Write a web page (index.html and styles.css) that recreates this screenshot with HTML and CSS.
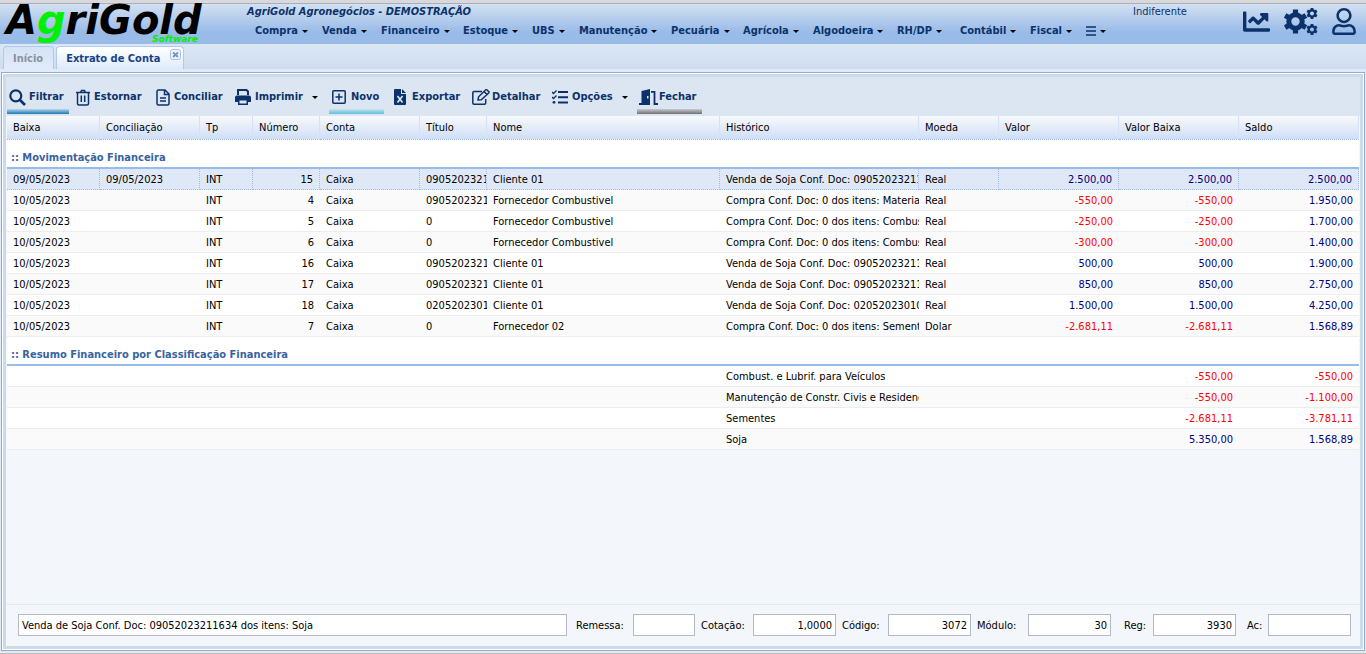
FILE: index.html
```html
<!DOCTYPE html>
<html lang="pt-BR">
<head>
<meta charset="utf-8">
<title>AgriGold Agronegócios - Extrato de Conta</title>
<link rel="stylesheet" href="styles.css">
</head>
<body>
<header class="top">
  <a class="logo" href="#" aria-label="AgriGold Software"><span class="logo-name">A<span class="logo-g">g</span>riGold</span><span class="logo-sub">Software</span></a>
  <div class="top-main">
    <h1 class="company">AgriGold Agronegócios - DEMOSTRAÇÃO</h1>
    <nav class="menu">
      <button class="menu-item caret">Compra</button>
      <button class="menu-item caret">Venda</button>
      <button class="menu-item caret">Financeiro</button>
      <button class="menu-item caret">Estoque</button>
      <button class="menu-item caret">UBS</button>
      <button class="menu-item caret">Manutenção</button>
      <button class="menu-item caret">Pecuária</button>
      <button class="menu-item caret">Agrícola</button>
      <button class="menu-item caret">Algodoeira</button>
      <button class="menu-item caret">RH/DP</button>
      <button class="menu-item caret">Contábil</button>
      <button class="menu-item caret">Fiscal</button>
      <button class="menu-item caret" aria-label="Mais"><svg width="10" height="10" viewBox="0 0 10 10"><path d="M0 1h10M0 5h10M0 9h10" stroke="currentColor" stroke-width="1.4"/></svg></button>
    </nav>
  </div>
  <span class="season">Indiferente</span>
  <div class="top-icons">
    <button class="icon-btn" aria-label="Gráficos"><svg width="27" height="27" viewBox="0 0 512 512" fill="currentColor"><path d="M496 384H64V80c0-8.840-7.160-16-16-16H16C7.160 64 0 71.160 0 80v336c0 17.670 14.330 32 32 32h464c8.840 0 16-7.160 16-16v-32c0-8.840-7.160-16-16-16zM464 96H345.940c-21.380 0-32.090 25.850-16.970 40.970l32.400 32.400L288 242.750l-73.370-73.370c-12.500-12.500-32.760-12.500-45.250 0l-68.690 68.690c-6.250 6.250-6.250 16.380 0 22.630l22.620 22.620c6.250 6.250 16.380 6.250 22.630 0L192 237.250l73.370 73.370c12.500 12.500 32.760 12.500 45.250 0l96-96 32.400 32.400c15.120 15.120 40.970 4.410 40.970-16.970V112c.010-8.840-7.150-16-15.990-16z"/></svg></button>
    <button class="icon-btn" aria-label="Configurações"><svg width="34" height="27" viewBox="0 0 34 27" fill="none" stroke="currentColor"><circle cx="11.500" cy="13.500" r="6.700" stroke-width="5"/><path d="M11.500 1.500v4M11.500 21.500v4M1.100 7.500l3.500 2M18.400 17.500l3.500 2M1.100 19.500l3.500-2M18.400 9.500l3.500-2" stroke-width="5.200"/><g id="g"><circle cx="28" cy="5.500" r="3.200" stroke-width="2.400"/><path d="M28 0v2M28 9v2M23.200 2.700l1.800 1M31 7.300l1.800 1M23.200 8.300l1.800-1M31 3.700l1.800-1" stroke-width="2.700"/></g><use href="#g" y="16"/></svg></button>
    <button class="icon-btn" aria-label="Usuário"><svg width="24" height="27" viewBox="0 0 448 512" fill="currentColor"><path d="M313.600 304c-28.700 0-42.500 16-89.600 16-47.100 0-60.800-16-89.600-16C60.200 304 0 364.200 0 438.400V464c0 26.500 21.500 48 48 48h352c26.500 0 48-21.500 48-48v-25.600c0-74.200-60.200-134.400-134.400-134.400zM400 464H48v-25.600c0-47.600 38.800-86.400 86.400-86.400 14.600 0 38.300 16 89.600 16 51.700 0 74.900-16 89.600-16 47.600 0 86.400 38.800 86.400 86.400V464zM224 288c79.500 0 144-64.500 144-144S303.500 0 224 0 80 64.500 80 144s64.500 144 144 144zm0-240c52.900 0 96 43.100 96 96s-43.100 96-96 96-96-43.100-96-96 43.100-96 96-96z"/></svg></button>
  </div>
</header>
<nav class="tabs">
  <a class="tab" href="#">Início</a>
  <span class="tab tab-active"><a class="tab-link" href="#">Extrato de Conta</a><button class="tab-close" aria-label="Fechar aba"><svg width="11" height="11" viewBox="0 0 11 11" fill="none"><rect x=".5" y=".5" width="10" height="10" rx="2" fill="#eef4fc" stroke="#a6c1e4"/><path d="M3 3.500l5 4.500M8 3.500l-5 4.500" stroke="#6e93c8" stroke-width="1.800"/></svg></button></span>
</nav>
<main class="frame">
 <div class="panel">
  <div class="toolbar">
    <button class="tool line-blue"><svg width="17" height="17" viewBox="0 0 17 17" fill="none" stroke="currentColor"><circle cx="6.800" cy="6.800" r="5.500" stroke-width="2.200"/><path d="M11 11l5 5" stroke-width="2.600"/></svg><span>Filtrar</span></button>
    <button class="tool"><svg width="14" height="17" viewBox="0 0 14 17" fill="none" stroke="currentColor" stroke-width="1.500"><path d="M0 3.500h14M4.500 3.500l1-2h3l1 2M1.500 3.500v11q0 1.500 1.500 1.500h8q1.500 0 1.500-1.500v-11M5.300 6.500v6.500M8.700 6.500v6.500"/></svg><span>Estornar</span></button>
    <button class="tool"><svg width="14" height="17" viewBox="0 0 14 17" fill="none" stroke="currentColor" stroke-width="1.500"><path d="M1 2.500Q1 1 2.500 1H9l4 4v9.500q0 1.500-1.500 1.500h-9Q1 16 1 14.500zM8.500 1v4.500H13M4 9h6M4 12h6"/></svg><span>Conciliar</span></button>
    <button class="tool"><svg width="16" height="16" viewBox="0 0 16 16"><path d="M3 6V1h8.500L13 2.500V6" fill="none" stroke="currentColor" stroke-width="2"/><path d="M2 6.500h12q2 0 2 2V13h-3v3H3v-3H0V8.500q0-2 2-2zM4.500 11.500v3h7v-3z" fill="currentColor" fill-rule="evenodd"/></svg><span class="caret caret-far">Imprimir</span></button>
    <button class="tool line-cyan"><svg width="14" height="14" viewBox="0 0 14 14" fill="none" stroke="currentColor" stroke-width="1.500"><rect x=".8" y=".8" width="12.400" height="12.400" rx="1"/><path d="M7 3.500v7M3.500 7h7"/></svg><span>Novo</span></button>
    <button class="tool tool-export"><svg width="12" height="16" viewBox="0 0 12 16"><path d="M1 0h6v5h5v10q0 1-1 1H1q-1 0-1-1V1q0-1 1-1zM8 0l4 4H8z" fill="currentColor"/><path d="M3.500 7l5 6.500M8.500 7l-5 6.500" stroke="#dce6f2" stroke-width="1.700"/></svg><span>Exportar</span></button>
    <button class="tool tool-tight"><svg width="18" height="16" viewBox="0 0 18 16" fill="none" stroke="currentColor" stroke-width="1.500"><path d="M10 2.500H2Q.8 2.500.8 3.700v10.300q0 1.200 1.200 1.200h10.500q1.200 0 1.200-1.200V10M6 11l.6-3.200L13.500 1q.8-.6 1.600 0l1.600 1.600q.6.700 0 1.500L9.300 10.800zM12 2.500l3 3"/></svg><span>Detalhar</span></button>
    <button class="tool"><svg width="16" height="14" viewBox="0 0 16 14" fill="none" stroke="currentColor"><path d="M6 2h10M6 7.200h10M6 12.400h10" stroke-width="2"/><path d="M0 2l1.500 1.500L4.500.5M0 7l1.500 1.500L4.500 5.500" stroke-width="1.300"/><circle cx="2" cy="12.300" r="1.400" fill="currentColor" stroke="none"/></svg><span class="caret caret-far">Opções</span></button>
    <button class="tool line-gray"><svg width="19" height="16" viewBox="0 0 19 16"><path d="M0 14h2.500V2L11 0v16H0zM8 7v2.500h1.500V7z" fill="currentColor" fill-rule="evenodd"/><path d="M12 2.800h3.500V15H19" fill="none" stroke="currentColor" stroke-width="1.800"/></svg><span>Fechar</span></button>
  </div>
  <div class="grid">
  <table class="ledger">
    <colgroup><col class="w-baixa"><col class="w-conc"><col class="w-tp"><col class="w-num"><col class="w-conc"><col class="w-num"><col><col class="w-hist"><col class="w-moeda"><col class="w-valor"><col class="w-valor"><col class="w-valor"></colgroup>
    <thead><tr><th>Baixa</th><th>Conciliação</th><th>Tp</th><th>Número</th><th>Conta</th><th>Título</th><th>Nome</th><th>Histórico</th><th>Moeda</th><th>Valor</th><th>Valor Baixa</th><th>Saldo</th></tr></thead>
    <tbody>
      <tr class="group"><th colspan="12">:: Movimentação Financeira</th></tr>
      <tr class="selected"><td>09/05/2023</td><td>09/05/2023</td><td>INT</td><td class="num">15</td><td>Caixa</td><td>0905202321</td><td>Cliente 01</td><td>Venda de Soja Conf. Doc: 09052023211</td><td>Real</td><td class="num pos">2.500,00</td><td class="num pos">2.500,00</td><td class="num pos">2.500,00</td></tr>
      <tr class="alt"><td>10/05/2023</td><td></td><td>INT</td><td class="num">4</td><td>Caixa</td><td>0905202321</td><td>Fornecedor Combustivel</td><td>Compra Conf. Doc: 0 dos itens: Material</td><td>Real</td><td class="num neg">-550,00</td><td class="num neg">-550,00</td><td class="num pos">1.950,00</td></tr>
      <tr><td>10/05/2023</td><td></td><td>INT</td><td class="num">5</td><td>Caixa</td><td>0</td><td>Fornecedor Combustivel</td><td>Compra Conf. Doc: 0 dos itens: Combus</td><td>Real</td><td class="num neg">-250,00</td><td class="num neg">-250,00</td><td class="num pos">1.700,00</td></tr>
      <tr class="alt"><td>10/05/2023</td><td></td><td>INT</td><td class="num">6</td><td>Caixa</td><td>0</td><td>Fornecedor Combustivel</td><td>Compra Conf. Doc: 0 dos itens: Combus</td><td>Real</td><td class="num neg">-300,00</td><td class="num neg">-300,00</td><td class="num pos">1.400,00</td></tr>
      <tr><td>10/05/2023</td><td></td><td>INT</td><td class="num">16</td><td>Caixa</td><td>0905202321</td><td>Cliente 01</td><td>Venda de Soja Conf. Doc: 09052023211</td><td>Real</td><td class="num pos">500,00</td><td class="num pos">500,00</td><td class="num pos">1.900,00</td></tr>
      <tr class="alt"><td>10/05/2023</td><td></td><td>INT</td><td class="num">17</td><td>Caixa</td><td>0905202321</td><td>Cliente 01</td><td>Venda de Soja Conf. Doc: 09052023211</td><td>Real</td><td class="num pos">850,00</td><td class="num pos">850,00</td><td class="num pos">2.750,00</td></tr>
      <tr><td>10/05/2023</td><td></td><td>INT</td><td class="num">18</td><td>Caixa</td><td>0205202301</td><td>Cliente 01</td><td>Venda de Soja Conf. Doc: 02052023010</td><td>Real</td><td class="num pos">1.500,00</td><td class="num pos">1.500,00</td><td class="num pos">4.250,00</td></tr>
      <tr class="alt"><td>10/05/2023</td><td></td><td>INT</td><td class="num">7</td><td>Caixa</td><td>0</td><td>Fornecedor 02</td><td>Compra Conf. Doc: 0 dos itens: Sement</td><td>Dolar</td><td class="num neg">-2.681,11</td><td class="num neg">-2.681,11</td><td class="num pos">1.568,89</td></tr>
    </tbody>
    <tbody>
      <tr class="group"><th colspan="12">:: Resumo Financeiro por Classificação Financeira</th></tr>
      <tr><td colspan="7"></td><td>Combust. e Lubrif. para Veículos</td><td></td><td></td><td class="num neg">-550,00</td><td class="num neg">-550,00</td></tr>
      <tr class="alt"><td colspan="7"></td><td>Manutenção de Constr. Civis e Residenc</td><td></td><td></td><td class="num neg">-550,00</td><td class="num neg">-1.100,00</td></tr>
      <tr><td colspan="7"></td><td>Sementes</td><td></td><td></td><td class="num neg">-2.681,11</td><td class="num neg">-3.781,11</td></tr>
      <tr class="alt"><td colspan="7"></td><td>Soja</td><td></td><td></td><td class="num pos">5.350,00</td><td class="num pos">1.568,89</td></tr>
    </tbody>
  </table>
  </div>
  <form class="footer">
    <input class="field field-desc" aria-label="Histórico" value="Venda de Soja Conf. Doc: 09052023211634 dos itens: Soja">
    <label for="remessa">Remessa:</label><input class="field" id="remessa">
    <label for="cotacao">Cotação:</label><input class="field" id="cotacao" value="1,0000">
    <label for="codigo">Código:</label><input class="field" id="codigo" value="3072">
    <label for="modulo">Módulo:</label><input class="field" id="modulo" value="30">
    <label for="reg">Reg:</label><input class="field" id="reg" value="3930">
    <label for="ac">Ac:</label><input class="field" id="ac">
  </form>
 </div>
</main>
</body>
</html>
```
FILE: styles.css
```css
* { box-sizing: border-box; }
body {
  margin: 0;
  min-height: 100vh;
  display: flex;
  flex-direction: column;
  background: #dfebfa;
  border-top: 3px solid #d9d9dd;
  border-bottom: 1px solid #c6bcae;
  font: 11px/14px "DejaVu Sans Condensed", "Noto Sans", sans-serif;
  color: #000;
}
button, input { font: inherit; color: inherit; }
button { border: 0; padding: 0; background: none; cursor: pointer; }
svg { display: block; flex: none; }

.top {
  display: flex;
  height: 41px;
  border-top: 1px solid #a9afb9;
  background: linear-gradient(#d3e1f1, #99bbe8 70%);
  color: #0b326b;
}
.logo {
  position: relative;
  width: 247px;
  padding-left: 6px;
  font-family: "DejaVu Sans", sans-serif;
  font-weight: bold;
  font-style: oblique;
  text-decoration: none;
  color: #000;
}
.logo-name { display: block; font-size: 40px; line-height: 32px; }
.logo-g, .logo-sub { color: #00f000; }
.logo-sub { position: absolute; left: 152px; bottom: 0; font-size: 9px; line-height: 9px; }
.top-main { flex: 1; }
.company { margin: 0; font-size: 11px; line-height: 15px; font-style: italic; }
.menu {
  display: grid;
  grid-template-columns: 67px 59px 82px 69px 47px 92px 72px 70px 84px 63px 70px 56px 30px;
  padding: 5px 0 0 8px;
  font-weight: bold;
}
.menu-item { justify-self: start; line-height: 14px; }
.caret { display: flex; align-items: center; gap: 4px; }
.caret::after {
  content: "";
  border: 3px solid transparent;
  border-top-color: #000;
  border-bottom: 0;
}
.caret-far { gap: 9px; }
.season { width: 110px; line-height: 15px; }
.top-icons { display: flex; align-items: flex-start; gap: 14px; padding: 4px 10px 0 0; }

.tabs {
  display: flex;
  align-items: flex-end;
  gap: 2px;
  height: 25px;
  padding-left: 3px;
  background: linear-gradient(#dde8f5, #cedcef);
  font-weight: bold;
}
.tab {
  display: flex;
  height: 23px;
  padding: 5px 10px 0 9px;
  border: 1px solid #b0caee;
  border-bottom: 0;
  border-radius: 4px 4px 0 0;
  background: linear-gradient(#d5e3f5, #e0ebfa);
  color: #8b919c;
  text-decoration: none;
}
.tab-active { padding: 5px 2px 0 9px; background: linear-gradient(#fff, #dfebfa); gap: 10px; }
.tab-link { color: #15428b; text-decoration: none; }
.tab-close { align-self: flex-start; margin-top: -3px; }

.frame {
  flex: 1;
  display: flex;
  margin: 3px 1px 2px;
  border: 1px solid #99a9c8;
  background: #fff;
  padding: 1px;
}
.panel {
  flex: 1;
  min-width: 0;
  display: flex;
  flex-direction: column;
  border: 3px solid #cddaea;
  background: #f3f6fb;
}
.toolbar {
  display: grid;
  grid-template-columns: 67px 80px 79px 96px 62px 79px 80px 87px 65px;
  height: 39px;
  padding: 3px 0 2px 1px;
  background: #dce6f2;
  color: #0b326b;
  font-weight: bold;
}
.tool {
  display: flex;
  align-items: center;
  justify-self: start;
  gap: 4px;
  padding: 3px 5px 3px 2px;
  background: left bottom / 100% 5px no-repeat;
}
.line-blue { gap: 3px; background-image: linear-gradient(#b9d8ec, #1d75b3); }
.line-cyan { padding: 3px 5px 3px 3px; gap: 5px; background-image: linear-gradient(#c6e1f0, #5fc0da); }
.line-gray { gap: 1px; background-image: linear-gradient(#c6cad2, #707074); }
.tool-export { padding-left: 3px; gap: 6px; }
.tool-tight { gap: 2px; }

.grid { flex: 1; padding: 0 1px; }
.ledger { width: 100%; table-layout: fixed; border-collapse: separate; border-spacing: 0; }
.w-baixa { width: 93px; }
.w-conc { width: 100px; }
.w-tp { width: 53px; }
.w-num { width: 67px; }
.w-hist { width: 199px; }
.w-moeda { width: 80px; }
.w-valor { width: 120px; }
.ledger thead th {
  height: 24px;
  padding: 0 6px;
  border-right: 1px solid #d5e2f5;
  border-bottom: 1px dotted #99b5e2;
  background: linear-gradient(#f8f9fc, #cfdff7);
  text-align: left;
  font-weight: normal;
}
.ledger td {
  height: 21px;
  padding: 2px 0 0 6px;
  border-bottom: 1px solid #ededed;
  background: #fff;
  overflow: hidden;
  white-space: nowrap;
}
.ledger .alt td { background: #fafafa; }
.ledger .selected td {
  background: #dfe8f6;
  border-bottom: 1px dotted #a3bae9;
  border-right: 1px dotted #a3bae9;
}
.ledger .num { padding-right: 6px; text-align: right; }
.pos { color: #000080; }
.neg { color: #f00; }
.group th {
  height: 29px;
  padding: 8px 0 0 4px;
  border-bottom: 2px solid #99bbe8;
  background: #fff;
  color: #3764a0;
  text-align: left;
}

.footer {
  display: grid;
  grid-template-columns: minmax(200px, 1fr) 66px 62px 58px 83px 52px 83px 57px 83px 42px 83px 32px 83px;
  align-items: center;
  height: 42px;
  padding: 0 9px 2px 12px;
  border-top: 1px solid #dfebfa;
}
.footer label { padding: 2px 0 0 6px; }
.footer label[for="remessa"] { padding-left: 9px; }
.footer label[for="reg"] { padding-left: 13px; }
.footer label[for="ac"] { padding-left: 11px; }
.field {
  width: 100%;
  height: 22px;
  padding: 2px 3px 0;
  border: 1px solid #b5b8c8;
  background: #fff;
  text-align: right;
}
.field-desc { text-align: left; }
```
